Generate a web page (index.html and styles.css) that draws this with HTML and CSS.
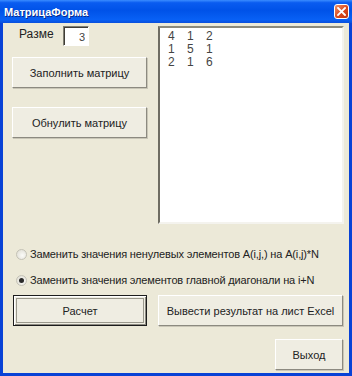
FILE: index.html
```html
<!DOCTYPE html>
<html lang="ru">
<head>
    <meta charset="UTF-8">
    <title>МатрицаФорма</title>
    <link rel="stylesheet" href="styles.css">
</head>
<body>

<div class="window">
    <div class="titlebar">
        <span class="title">МатрицаФорма</span>
        <button class="close" title="Закрыть">
            <svg width="9" height="9" viewBox="0 0 9 9"><path d="M1 1L8 8M8 1L1 8" stroke="#fff" stroke-width="1.8" stroke-linecap="square"/></svg>
        </button>
    </div>

    <div class="client">
        <div class="top">
            <div class="left">
                <div class="size-row">
                    <label for="size">Разме</label>
                    <input type="text" id="size" class="size" value="3">
                </div>
                <button class="btn fill">Заполнить матрицу</button>
                <button class="btn reset">Обнулить матрицу</button>
            </div>
            <div class="matrix">
                <div class="row"><span>4</span><span>1</span><span>2</span></div>
                <div class="row"><span>1</span><span>5</span><span>1</span></div>
                <div class="row"><span>2</span><span>1</span><span>6</span></div>
            </div>
        </div>

        <div class="options">
            <label class="opt"><input type="radio" name="mode"> Заменить значения ненулевых элементов A(i,j,) на A(i,j)*N</label>
            <label class="opt"><input type="radio" name="mode" checked> Заменить значения элементов главной диагонали на i+N</label>
        </div>

        <div class="actions">
            <button class="btn calc default">Расчет</button>
            <button class="btn excel">Вывести результат на лист Excel</button>
        </div>

        <div class="footer">
            <button class="btn exit">Выход</button>
        </div>
    </div>
</div>

</body>
</html>
```

FILE: styles.css
```css
body { margin: 0; font-family: "Liberation Sans", Arial, sans-serif; font-size: 11px; color: #1a1a1a; }

.window { width: 352px; height: 376px; box-sizing: border-box; display: flex; flex-direction: column; background: #0842d6; }

/* заголовок окна */
.titlebar { height: 23px; flex: none; display: flex; align-items: center; justify-content: space-between; padding: 0 3px 0 4px;
    background: linear-gradient(to bottom, #3a8cff 0%, #0a5cf0 12%, #0052e8 45%, #0860f5 85%, #0a4fdc 100%); }
.title { color: #fff; font-family: "Liberation Sans Narrow", "Liberation Sans", sans-serif; font-weight: bold; font-size: 11px; text-shadow: 1px 1px 0 #0a2a8a; }
.close { width: 15px; height: 15px; padding: 0; display: flex; align-items: center; justify-content: center;
    border: 1px solid #fff; border-radius: 3px; background: linear-gradient(135deg, #f0936a, #d9471c 55%, #c13a12); }

.client { flex: 1; margin: 0 3px 3px 3px; background: #ece9d8; padding: 3px 5px 3px 9px; display: flex; flex-direction: column; }

.top { display: flex; height: 198px; }
.left { width: 135px; display: flex; flex-direction: column; }
.size-row { display: flex; align-items: center; height: 20px; }
.size-row label { margin-left: 7px; width: 44px; margin-top: -4px; font-size: 12px; color: #222; }
.size { width: 26px; height: 20px; box-sizing: border-box; padding: 2px 3px 0 0; margin: 0; text-align: right; font: inherit; font-size: 11px; color: #444;
    background: #fff; border: 1px solid; border-color: #7f7d72 #fff #fff #7f7d72; box-shadow: inset 1px 1px 0 #3f3d36; }

.btn { font: inherit; font-size: 11px; color: #222; background: #efede2; padding: 0; height: 31px; box-sizing: border-box;
    border: 1px solid; border-color: #fff #8c8a80 #8c8a80 #fff; box-shadow: 1px 1px 0 #c9c6b7; }
.fill { margin-top: 11px; }
.reset { margin-top: 19px; }

.matrix { margin-left: auto; width: 186px; height: 198px; box-sizing: border-box; background: #fff; padding: 2px 0 0 8px;
    border: 2px solid; border-color: #8c8a7c #f4f3ee #f4f3ee #6e6c62; color: #444; font-size: 12px; }
.row { height: 13px; line-height: 13px; }
.row span { display: inline-block; width: 19px; }

.options { margin-top: 22px; display: flex; flex-direction: column; gap: 10px; }
.opt { display: flex; align-items: center; height: 16px; white-space: nowrap; letter-spacing: -0.15px; color: #222; }
.opt input { appearance: none; margin: 0 3px 0 4px; width: 11px; height: 11px; border-radius: 50%; border: 1px solid #c4c2b6;
    background: radial-gradient(circle at 60% 60%, #fbfbf8, #dcdad0); box-sizing: border-box; position: relative; }
.opt input:checked::after { content: ""; position: absolute; left: 2px; top: 2px; width: 5px; height: 5px; border-radius: 50%; background: #2a2a2a; }

.actions { margin-top: 7px; display: flex; justify-content: space-between; }
.calc { margin-left: 1px; width: 134px; }
.default { border: 1px solid #1c1c1c; box-shadow: inset 1px 1px 0 #fff, inset -1px -1px 0 #8c8a80, inset 0 0 0 2px #efede2, inset 0 0 0 3px #9a988c; }
.excel { width: 185px; margin-right: 1px; }

.footer { margin-top: 13px; display: flex; justify-content: flex-end; }
.exit { width: 68px; margin-right: 1px; }
```
